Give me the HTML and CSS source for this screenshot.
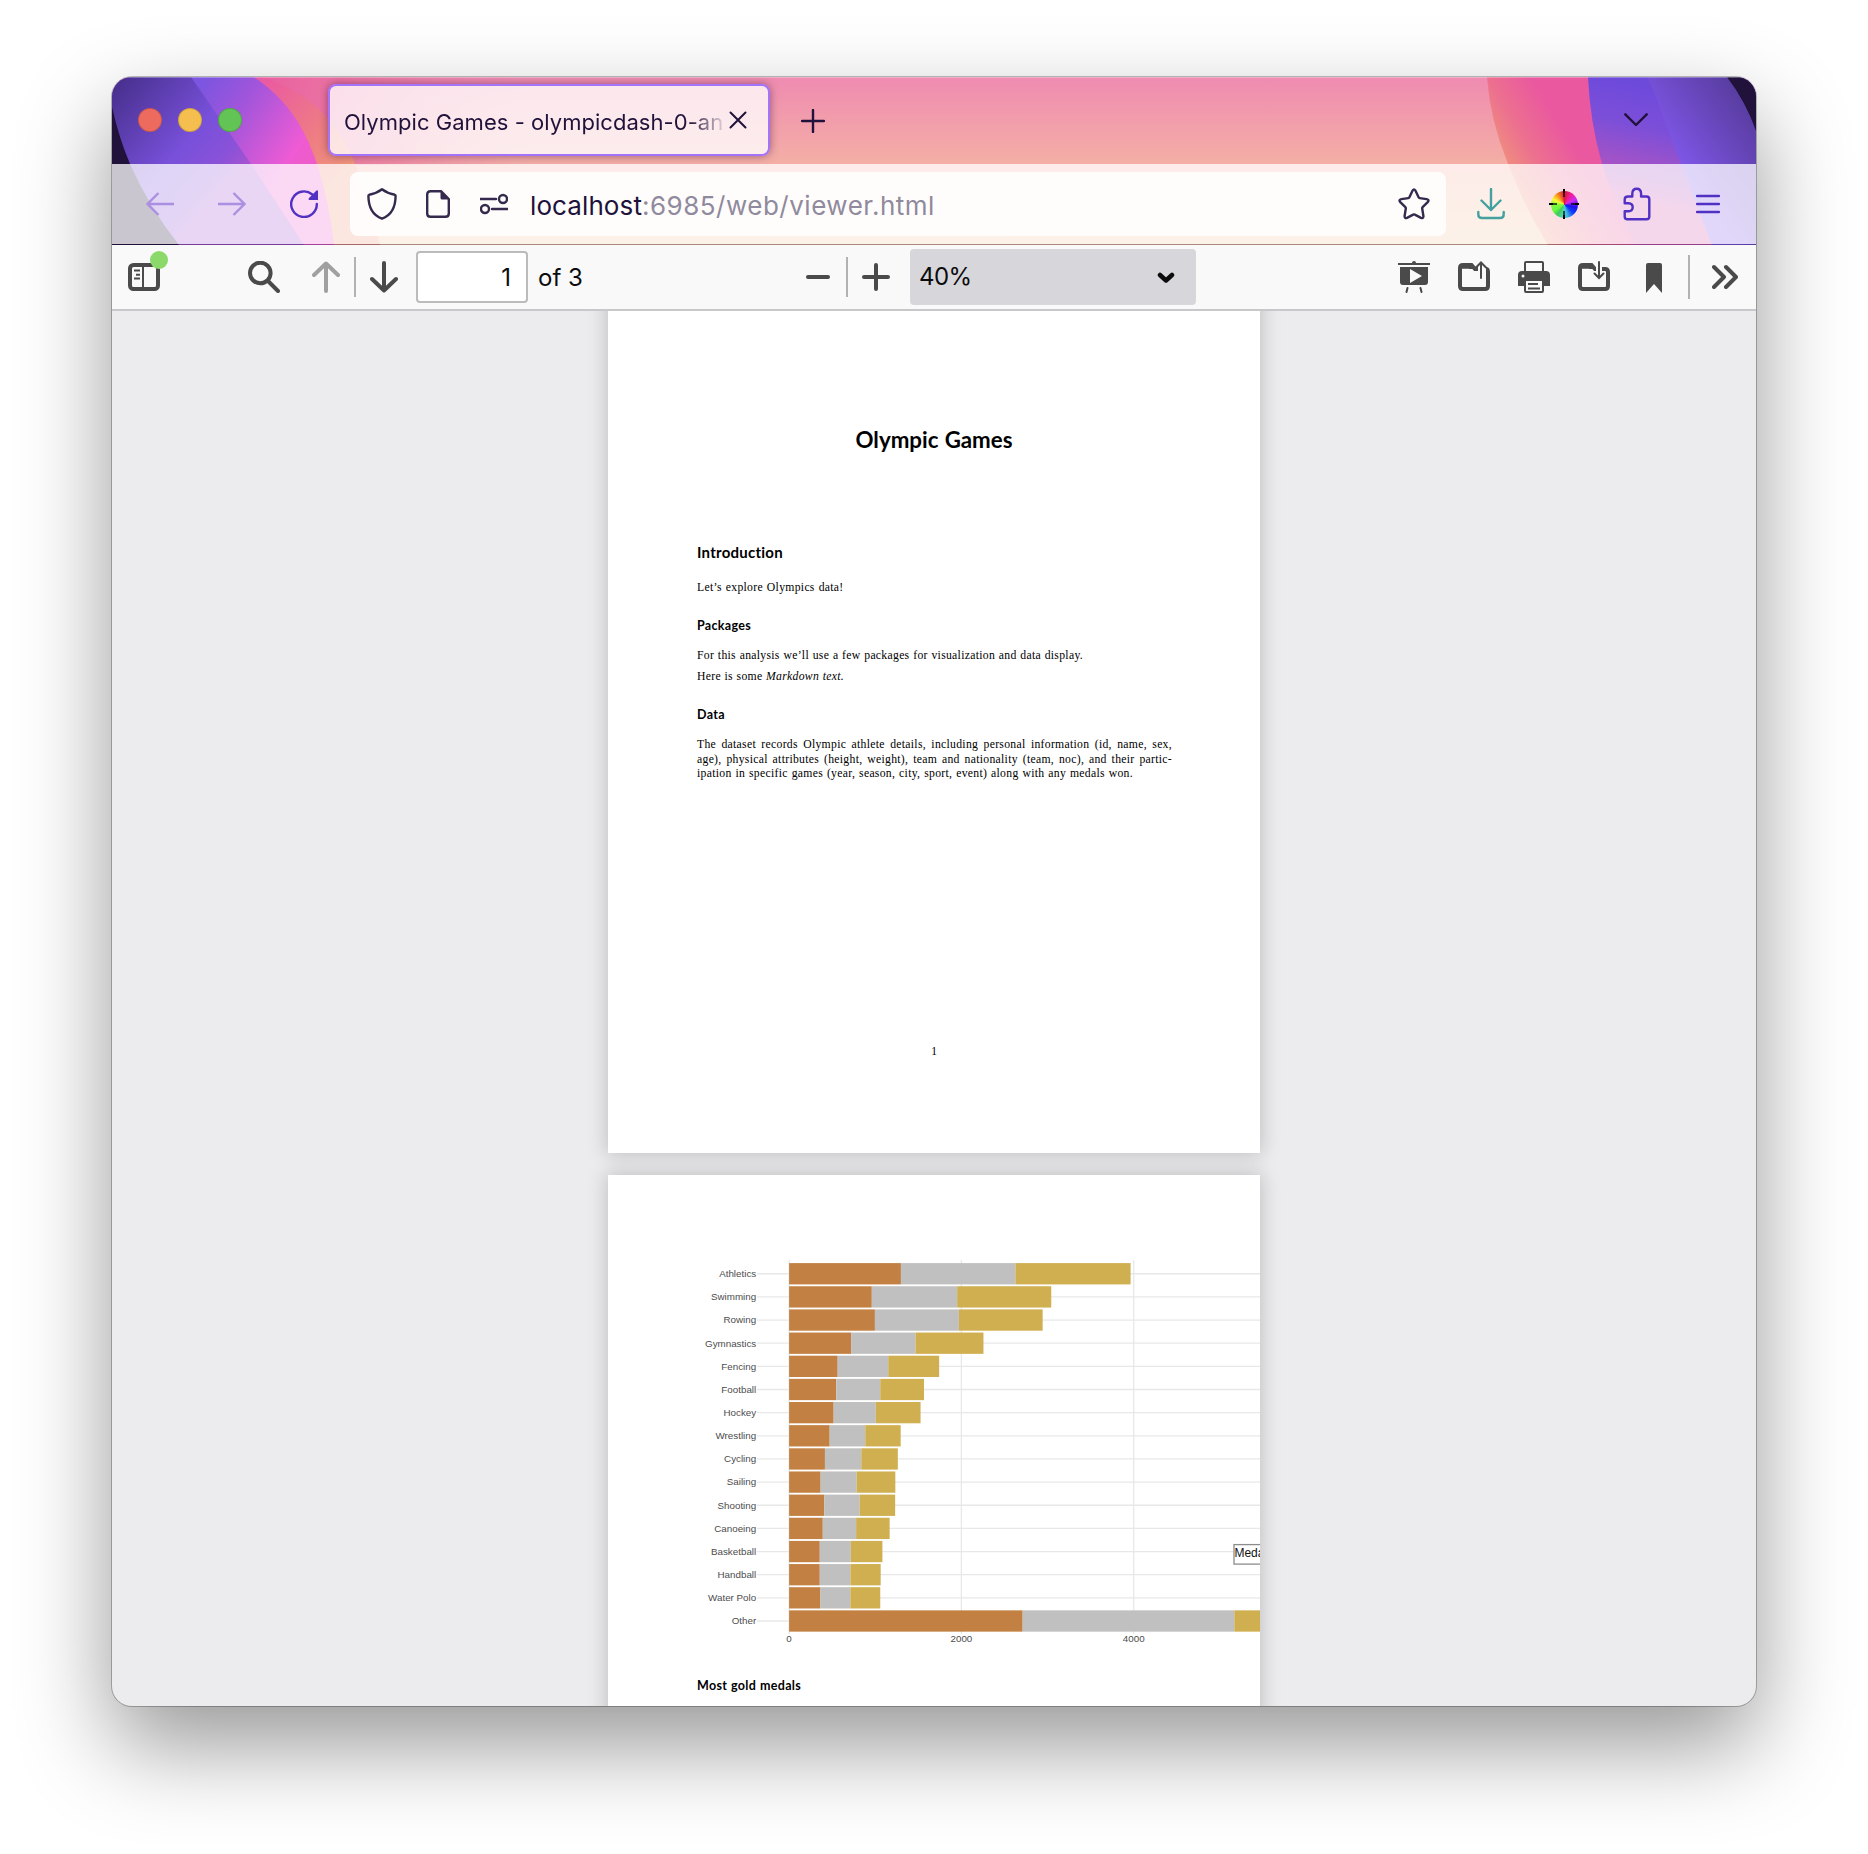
FILE: index.html
```html
<!DOCTYPE html>
<html lang="en">
<head>
<meta charset="utf-8">
<title>Olympic Games</title>
<link rel="stylesheet" href="styles.css">
</head>
<body>
<div class="window">
  <header class="chrome">
    <svg class="theme" viewBox="0 0 1644 168" preserveAspectRatio="none" aria-hidden="true">
      <defs>
        <linearGradient id="wash" x1="0" y1="0" x2="0" y2="1"><stop offset="0" stop-color="#ef8bb1"/><stop offset=".52" stop-color="#f4afa5"/><stop offset="1" stop-color="#f3c89c"/></linearGradient>
        <linearGradient id="flareL" gradientUnits="userSpaceOnUse" x1="150" y1="0" x2="420" y2="0"><stop offset="0" stop-color="#e9609f"/><stop offset=".5" stop-color="#ea70a0" stop-opacity=".55"/><stop offset="1" stop-color="#ef8bb1" stop-opacity="0"/></linearGradient>
        <linearGradient id="emberL" gradientUnits="userSpaceOnUse" x1="150" y1="10" x2="235" y2="90"><stop offset="0" stop-color="#ea5ba1"/><stop offset=".65" stop-color="#ee7f82"/><stop offset="1" stop-color="#f0957c"/></linearGradient>
        <linearGradient id="magenta" gradientUnits="userSpaceOnUse" x1="85" y1="15" x2="190" y2="85"><stop offset="0" stop-color="#7c55e0"/><stop offset=".35" stop-color="#a055db"/><stop offset=".9" stop-color="#ee5bd4"/><stop offset="1" stop-color="#ee5bcb"/></linearGradient>
        <linearGradient id="violet" gradientUnits="userSpaceOnUse" x1="10" y1="0" x2="125" y2="100"><stop offset="0" stop-color="#48308e"/><stop offset=".6" stop-color="#7850da"/><stop offset=".85" stop-color="#8a52d8"/><stop offset="1" stop-color="#a553d0"/></linearGradient>
        <linearGradient id="emberR" gradientUnits="userSpaceOnUse" x1="1385" y1="90" x2="1450" y2="50"><stop offset="0" stop-color="#f19779"/><stop offset=".5" stop-color="#ec708f"/><stop offset="1" stop-color="#ea589f"/></linearGradient>
        <linearGradient id="violetR" gradientUnits="userSpaceOnUse" x1="1530" y1="10" x2="1505" y2="120"><stop offset="0" stop-color="#6e4adb"/><stop offset=".35" stop-color="#7d4fd8"/><stop offset=".8" stop-color="#ad54c2"/><stop offset="1" stop-color="#d358b0"/></linearGradient>
        <linearGradient id="duskR" gradientUnits="userSpaceOnUse" x1="1555" y1="75" x2="1640" y2="15"><stop offset="0" stop-color="#8058ea"/><stop offset=".5" stop-color="#6a48c0"/><stop offset="1" stop-color="#553a98"/></linearGradient>
      </defs>
      <rect width="1644" height="168" fill="url(#wash)"/>
      <rect x="140" width="290" height="88" fill="url(#flareL)"/>
      <path d="M0 0H150C196 14 227 45 243 87Q258 125 268 168H0Z" fill="url(#emberL)"/>
      <path d="M0 0H142C177 24 193 52 205 87Q217 125 222 168H0Z" fill="url(#magenta)"/>
      <path d="M0 0H79L139 87L192 168H0Z" fill="url(#violet)"/>
      <path d="M0 30Q7 61 18 87Q38 132 67 168H0Z" fill="#20123a"/>
      <path d="M1375 0Q1378 43 1396 87Q1411 127 1436 168H1644V0Z" fill="url(#emberR)"/>
      <path d="M1476 0Q1478 45 1490 87Q1503 131 1523 168H1644V0Z" fill="url(#violetR)"/>
      <path d="M1536 0L1569 87L1600 168H1644V0Z" fill="url(#duskR)"/>
      <path d="M1615 0Q1634 25 1644 54V0Z" fill="#20123a"/>
    </svg>

    <div class="tabstrip">
      <div class="lights"><i class="light red"></i><i class="light amber"></i><i class="light green"></i></div>
      <div class="tab">
        <span class="tab-title">Olympic Games - olympicdash-0-an</span>
        <svg class="tab-close" width="18" height="18" viewBox="0 0 18 18"><path d="M1.5 1.5l15 15M16.500 1.500l-15 15"/></svg>
      </div>
      <svg class="new-tab" width="24" height="24" viewBox="0 0 24 24"><path d="M12 1v22M1 12h22"/></svg>
      <svg class="all-tabs" width="24" height="14" viewBox="0 0 24 14"><path d="M1.300 1.300L12 12L22.700 1.300"/></svg>
    </div>

    <div class="navbar">
      <div class="nav-button dim"><svg width="28" height="24" viewBox="0 0 28 24"><path d="M28 12H2M12.500 1L1.500 12L12.500 23"/></svg></div>
      <div class="nav-button dim"><svg width="28" height="24" viewBox="0 0 28 24"><path d="M0 12H26M15.500 1L26.500 12L15.500 23"/></svg></div>
      <div class="nav-button"><svg width="28" height="28" viewBox="0 0 28 28"><path d="M26.800 14A12.800 12.800 0 1 1 22 4.200"/><path class="solid" d="M28 1V10H19Q18 9 19 8L26.500 .5Q27.500 0 28 1Z"/></svg></div>

      <div class="urlbar">
        <svg width="30" height="32" viewBox="0 0 30 32"><path d="M15 1.300C11.500 4 6.500 6 2.200 6.800Q1.400 7 1.400 8C1.500 18 5 27 15 30.700C25 27 28.500 18 28.600 8Q28.600 7 27.800 6.800C23.500 6 18.500 4 15 1.300Z"/></svg>
        <svg class="doc" width="24" height="28" viewBox="0 0 24 28"><path d="M15 1.200H4.500Q1.200 1.200 1.200 4.500V23.500Q1.200 26.800 4.500 26.800H19.500Q22.800 26.800 22.800 23.500V9Z"/><path class="solid" d="M14.500 .5V8Q14.500 9.500 16 9.500H23.500Z"/></svg>
        <svg class="perms" width="28" height="22" viewBox="0 0 28 22"><path d="M0 6H16M12 16H28"/><circle cx="23" cy="6" r="4"/><circle cx="5" cy="16" r="4"/></svg>
        <div class="url"><span class="host">localhost</span><span class="path">:6985/web/viewer.html</span></div>
        <svg class="star" width="32" height="32" viewBox="0 0 32 32"><path d="M14.600 2.500Q16 .2 17.400 2.500L20.600 9.300Q20.900 10 21.700 10.100L28.600 11.100Q31.700 11.800 29.700 14.100L24.600 19.200Q24.100 19.800 24.200 20.500L25.400 28Q25.500 30.700 23 29.900L16.800 26.600Q16 26.200 15.200 26.600L9 29.900Q6.500 30.700 6.600 28L7.800 20.500Q7.900 19.800 7.400 19.200L2.300 14.100Q.3 11.800 3.400 11.100L10.300 10.100Q11.100 10 11.400 9.300Z"/></svg>
      </div>

      <div class="nav-button teal"><svg width="28" height="32" viewBox="0 0 28 32"><path d="M14 1V22M4.500 12.500L14 22L23.500 12.500M1.300 24V26.500Q1.300 30 5 30H23Q26.700 30 26.700 26.500V24"/></svg></div>
      <div class="nav-button"><div class="wheel"><svg width="30" height="30" viewBox="0 0 30 30"><path d="M15 0V8M15 22V30M0 15H8M22 15H30" opacity=".65"/><path d="M15 0V4M15 26V30M0 15H4M26 15H30"/></svg></div></div>
      <div class="nav-button puzzle"><svg width="28" height="34" viewBox="0 0 28 34"><path d="M5 9.500H9.300V6.500Q9.500 1.800 13.700 1.800Q17.900 1.800 18.100 6.500V9.500H23.500Q26.300 9.500 26.300 12.300V29.500Q26.300 32.300 23.500 32.300H4.500Q1.700 32.300 1.700 29.500V24.300H5.500Q9.700 24 9.700 20.200Q9.700 16.400 5.500 16.200H1.700V12.500Q1.700 9.500 5 9.500Z"/></svg></div>
      <div class="nav-button"><svg class="menu" width="24" height="20" viewBox="0 0 24 20"><path d="M1 2H23M1 10H23M1 18H23"/></svg></div>
    </div>
  </header>

  <div class="toolbar">
    <div class="sidebar-toggle">
      <svg width="32" height="32" viewBox="0 0 32 32"><rect x="2" y="4" width="28" height="24" rx="3.500" fill="none" stroke="#4a4a4b" stroke-width="4"/><path d="M15 4V28M6 9.500H12M8 13.700H12M6 17.500H12" stroke="#4a4a4b" stroke-width="2" fill="none"/></svg>
      <i class="badge"></i>
    </div>
    <svg class="find" width="32" height="32" viewBox="0 0 32 32"><circle cx="12.300" cy="12" r="10.300"/><path d="M20 20L30 30"/></svg>
    <svg class="prev" width="28" height="32" viewBox="0 0 28 32"><path d="M14 30V3M2 14L14 2.500L26 14"/></svg>
    <i class="rule"></i>
    <svg class="next" width="28" height="32" viewBox="0 0 28 32"><path d="M14 2V29M2 18L14 29.500L26 18"/></svg>
    <div class="page-input">1</div>
    <span class="page-count">of 3</span>
    <svg class="minus" width="24" height="28" viewBox="0 0 24 28"><path d="M2 14H22"/></svg>
    <i class="rule zoom-rule"></i>
    <svg class="plus" width="28" height="28" viewBox="0 0 28 28"><path d="M2 14H26M14 2V26"/></svg>
    <div class="zoom-select"><span>40%</span><svg width="18" height="12" viewBox="0 0 18 12"><path d="M3 3L9 8.500L15 3"/></svg></div>
    <div class="actions">
      <svg class="fill" width="32" height="32" viewBox="0 0 32 32"><path fill-rule="evenodd" d="M0 2H14Q14 0 16 0T18 2H32V4H0ZM2 6H30V21Q30 24 27 24H5Q2 24 2 21ZM12 8V22L24 15Z"/><path class="thin" d="M9.500 27L8.500 31M22.500 27L23.500 31"/></svg>
      <svg width="32" height="32" viewBox="0 0 32 32"><path class="thick" d="M22 8H17L13.500 4H5Q2 4 2 7V25Q2 28 5 28H27Q30 28 30 25V11Q30 8 28 8"/><path class="fillp" d="M2 8L13 8L18 8L14 3H5L2 5Z"/><path d="M4 8.500H11" stroke="#f9f9fa" stroke-width="1.500"/><path class="halo" d="M23 2V18"/><path class="thin" d="M23 17V2M18 6.500L23 1.500L28 6.500"/></svg>
      <svg class="fill" width="32" height="32" viewBox="0 0 32 32"><path fill-rule="evenodd" d="M6 10V2Q6 0 8 0H24Q26 0 26 2V10H28Q32 10 32 14V25H26V30Q26 32 24 32H8Q6 32 6 30V25H0V14Q0 10 4 10ZM8 2V10H24V2ZM8 20V30H24V20ZM5 13.500A1.500 1.500 0 1 0 5 16.500A1.500 1.500 0 1 0 5 13.500Z"/><path d="M10 22H20V24H10ZM10 26.500H22V28.500H10Z"/></svg>
      <svg width="32" height="32" viewBox="0 0 32 32"><path class="thick" d="M20 8H17L13.500 4H5Q2 4 2 7V25Q2 28 5 28H27Q30 28 30 25V11Q30 8 27 8H24"/><path class="fillp" d="M2 8L13 8L18 8L14 3H5L2 5Z"/><path d="M4 8.500H11" stroke="#f9f9fa" stroke-width="1.500"/><path class="halo" d="M21 0V16"/><path class="thin" d="M21 1V16M16.500 12.500L21 17L25.500 12.500"/></svg>
      <svg class="fill" width="32" height="32" viewBox="0 0 32 32"><path d="M8 4Q8 2 10 2H22Q24 2 24 4V32L16 23L8 32Z"/></svg>
    </div>
    <i class="rule tall"></i>
    <svg class="more" width="26" height="26" viewBox="0 0 26 26"><path d="M2 3L12 13L2 23M14 3L24 13L14 23"/></svg>
  </div>

  <main class="viewer">
    <article class="page first">
      <h1>Olympic Games</h1>
      <div class="column">
        <h2>Introduction</h2>
        <p class="line w-lets">Let’s explore Olympics data!</p>
        <h3 class="packages">Packages</h3>
        <p class="line w-for">For this analysis we’ll use a few packages for visualization and data display.</p>
        <p class="line w-here">Here is some <em>Markdown text.</em></p>
        <h3 class="data">Data</h3>
        <div class="para">
          <p class="line">The dataset records Olympic athlete details, including personal information (id, name, sex,</p>
          <p class="line">age), physical attributes (height, weight), team and nationality (team, noc), and their partic-</p>
          <p class="line w-last">ipation in specific games (year, season, city, sport, event) along with any medals won.</p>
        </div>
      </div>
      <div class="folio">1</div>
    </article>
    <article class="page second">
      <svg id="chart" class="chart" width="652" height="480" viewBox="608 1175 652 480"></svg>
      <h3 class="gold">Most gold medals</h3>
    </article>
  </main>
</div>
<script src="chart.js"></script>
</body>
</html>
```
FILE: styles.css
```css
* { box-sizing: border-box; }
body {
  margin: 0;
  width: 1868px;
  height: 1854px;
  padding: 77px 112px 0;
  background: #fff;
  overflow: hidden;
  font-family: Inter, "Liberation Sans", sans-serif;
}
svg { display: block; flex: none; }
h1, h2, h3, p { margin: 0; }

.window {
  width: 1644px;
  height: 1629px;
  border-radius: 20px;
  background: #ececee;
  box-shadow: 0 0 0 1px rgba(0, 0, 0, .25), 0 39px 92px rgba(0, 0, 0, .41);
  overflow: hidden;
  display: flex;
  flex-direction: column;
}

/* Browser chrome */
.chrome { position: relative; height: 168px; flex: none; }
.theme { position: absolute; left: 0; top: 0; width: 1644px; height: 168px; z-index: 0; }
.chrome::after {
  content: "";
  position: absolute;
  inset: 0;
  border-bottom: 1px solid rgba(32, 18, 58, .35);
  border-top: 1px solid rgba(255, 255, 255, .3);
  pointer-events: none;
}
.tabstrip { position: relative; height: 87px; display: flex; align-items: center; padding: 0 108px 2px 26px; }
.lights { display: flex; gap: 16px; width: 190px; }
.light { width: 24px; height: 24px; border-radius: 50%; border: 1px solid rgba(0, 0, 0, .16); }
.red { background: #ed6a5e; }
.amber { background: #f5bf4f; }
.green { background: #61c454; }
.tab {
  width: 442px;
  height: 72px;
  padding: 0 21px 0 14px;
  border: 2px solid #a374f9;
  border-radius: 8px;
  background: rgba(255, 255, 255, .78);
  box-shadow: 0 0 8px rgba(60, 20, 60, .5);
  display: flex;
  align-items: center;
  justify-content: space-between;
}
.tab-title {
  width: 379px;
  overflow: hidden;
  white-space: nowrap;
  font-size: 22px;
  line-height: 32px;
  letter-spacing: .04px;
  color: #20123a;
  padding-top: 5px;
  -webkit-mask-image: linear-gradient(to right, #000 345px, transparent 384px);
  mask-image: linear-gradient(to right, #000 345px, transparent 384px);
}
.tab-close, .new-tab, .all-tabs { fill: none; stroke: #20123a; stroke-width: 2.4; stroke-linecap: round; stroke-linejoin: round; }
.tab-close { stroke-width: 2; }
.new-tab { margin-left: 31px; margin-top: 3px; }
.all-tabs { margin-left: auto; }

.navbar { position: relative; height: 80px; padding: 0 12px; display: flex; align-items: center; background: rgba(255, 255, 255, .76); }
.nav-button { width: 72px; height: 64px; display: flex; align-items: center; justify-content: center; color: #5130c4; }
.navbar svg { fill: none; stroke: currentColor; stroke-width: 2.4; stroke-linecap: round; stroke-linejoin: round; }
.navbar .solid { fill: currentColor; stroke: none; }
.nav-button.dim { color: #ab90e1; }
.dim svg { stroke-linecap: butt; stroke-linejoin: miter; }
.nav-button.teal { color: #45a1a1; padding-right: 2px; }
.teal svg { margin-top: -1px; }
.puzzle { padding-left: 2px; }
.urlbar {
  width: 1096px;
  height: 64px;
  margin: 0 10px;
  padding: 0 16px 0 17px;
  border-radius: 8px;
  background: rgba(255, 255, 255, .86);
  display: flex;
  align-items: center;
  color: #352a4d;
}
.doc { margin-left: 29px; }
.perms { margin-left: 30px; }
.url { margin-left: 22px; padding-top: 3px; font-size: 26px; line-height: 36px; white-space: nowrap; letter-spacing: .5px; }
.host { color: #20123a; letter-spacing: .1px; }
.path { color: #8f8a9d; }
.star { margin-left: auto; }
.wheel { position: relative; width: 30px; height: 30px; }
.wheel::before {
  content: "";
  position: absolute;
  inset: 1.500px;
  border-radius: 50%;
  background: conic-gradient(#d8173c, #f31b90 30deg, #d02bf0 65deg, #1a10f0 105deg, #1040f5 135deg, #3fb0e8 165deg, #4fd8c0 185deg, #40c85a 215deg, #6dfa3c 240deg, #80fa40 268deg, #fbf936 295deg, #f88a1c 325deg, #d8173c);
}
.wheel svg { position: relative; stroke: #000; stroke-width: 2; stroke-linecap: butt; }

/* Viewer toolbar */
.toolbar { height: 66px; flex: none; display: flex; align-items: center; padding: 0 18px 0 16px; background: #f9f9fa; border-bottom: 2px solid #c8c8ca; color: #0c0c0d; font-size: 24px; }
.toolbar > svg { fill: none; stroke: #4a4a4b; stroke-width: 4; stroke-linecap: round; stroke-linejoin: round; }
.sidebar-toggle { position: relative; width: 32px; height: 32px; }
.badge { position: absolute; left: 22px; top: -10px; width: 18px; height: 18px; border-radius: 50%; background: #8bd96b; }
.find { margin-left: 88px; }
.prev { margin-left: 32px; opacity: .5; }
.rule { width: 2px; height: 40px; background: #b2b2b4; margin-left: 14px; flex: none; }
.next { margin-left: 14px; }
.page-input { width: 112px; height: 52px; margin-left: 18px; padding-right: 15px; border: 2px solid #bbbbbc; border-radius: 4px; background: #fff; line-height: 50px; text-align: right; }
.page-count { margin-left: 10px; width: 50px; line-height: 50px; white-space: nowrap; padding-top: 1px; }
.minus { margin-left: 218px; }
.zoom-rule { margin-left: 16px; }
.plus { margin-left: 14px; }
.zoom-select { width: 286px; height: 56px; margin-left: 20px; padding: 0 21px 0 9px; border-radius: 4px; background: #d7d7db; display: flex; align-items: center; justify-content: space-between; letter-spacing: -.6px; line-height: 54px; }
.zoom-select svg { fill: none; stroke: #0c0c0d; stroke-width: 4.500; stroke-linecap: round; stroke-linejoin: round; margin-top: 1px; }
.actions { margin-left: 202px; display: flex; gap: 28px; }
.actions svg { fill: none; }
.actions .fill, .actions .fillp { fill: #4a4a4b; }
.thick { stroke: #4a4a4b; stroke-width: 4; }
.thin { stroke: #4a4a4b; stroke-width: 2; stroke-linecap: round; }
.halo { stroke: #f9f9fa; stroke-width: 6; }
.tall { height: 44px; margin-left: 18px; }
.more { margin-left: 22px; }

/* Documents */
.viewer { flex: 1; overflow: hidden; display: flex; flex-direction: column; align-items: center; gap: 22px; }
.page { width: 652px; flex: none; background: #fff; box-shadow: 0 0 18px 2px rgba(0, 0, 0, .18); color: #000; }
.first { height: 882px; margin-top: -40px; padding-top: 156px; }
.second { height: 844px; overflow: hidden; }
h1, h2, h3 { font-family: Lato, "Open Sans", sans-serif; font-weight: 700; white-space: nowrap; }
h1 { width: 157px; margin: 0 auto; font-size: 22.300px; line-height: 26px; text-align-last: justify; }
.column { width: 475px; margin: 90px 0 0 89px; }
h2 { font-size: 15px; line-height: 18px; letter-spacing: .25px; }
h3 { font-size: 12.500px; line-height: 15px; letter-spacing: .3px; }
.line { font-family: "Liberation Serif", serif; font-size: 11.700px; line-height: 14px; letter-spacing: .3px; white-space: nowrap; text-align: justify; text-align-last: justify; }
.w-lets { width: 146.500px; margin-top: 20px; }
.packages { margin-top: 23px; }
.w-for { width: 386px; margin-top: 16px; }
.w-here { width: 147px; margin-top: 7px; }
.data { margin-top: 23px; }
.para { margin-top: 16px; }
.para .line { line-height: 14.500px; }
.w-last { width: 436px; }
.folio { margin-top: 262px; text-align: center; font: 11.500px/14px "Liberation Serif", serif; }
.chart { font-family: "Liberation Sans", Arial, sans-serif; }
.grid { stroke: #e8e8e8; stroke-width: 1.300; }
.tick { fill: #4d4d4d; font-size: 9.800px; }
.legend { fill: #fff; stroke: #8c8c8c; stroke-width: 1.300; }
.legend-text { fill: #111; font-size: 12px; }
.gold { margin: 23px 0 0 89px; width: 104px; text-align-last: justify; }
```
FILE: chart.js
```js
// Medal counts per sport: bronze, silver, gold.
const sports = [
  ["Athletics", 1298, 1329, 1337], ["Swimming", 960, 991, 1092], ["Rowing", 996, 975, 972],
  ["Gymnastics", 720, 747, 789], ["Fencing", 564, 587, 591], ["Football", 547, 511, 508],
  ["Hockey", 517, 489, 520], ["Wrestling", 471, 413, 411], ["Cycling", 416, 422, 424],
  ["Sailing", 366, 418, 449], ["Shooting", 409, 409, 413], ["Canoeing", 391, 387, 389],
  ["Basketball", 356, 360, 367], ["Handball", 356, 356, 351], ["Water Polo", 364, 347, 347],
  ["Other", 2711, 2457, 2500]
];
const colors = ["#c28142", "#c0c0c0", "#cfaf4f"];
const x0 = 789.1, unit = 172.3 / 2000, top0 = 1263.1, pitch = 23.15, bar = 21.3;
let out = "";
[0, 2000, 4000].forEach(v => {
  const x = x0 + v * unit;
  out += `<path class="grid" d="M${x} 1260V1634"/><text class="tick" text-anchor="middle" x="${x}" y="1641.5">${v}</text>`;
});
sports.forEach(([name, ...counts], i) => {
  const y = top0 + i * pitch;
  out += `<path class="grid" d="M757 ${y + bar / 2}H1260"/>`;
  out += `<text class="tick" text-anchor="end" x="756.2" y="${y + bar / 2 + 3.3}">${name}</text>`;
  let x = x0;
  counts.forEach((c, k) => {
    out += `<rect x="${x}" y="${y}" width="${c * unit}" height="${bar}" fill="${colors[k]}"/>`;
    x += c * unit;
  });
});
out += `<rect class="legend" x="1234" y="1544.6" width="60" height="19.5"/><text class="legend-text" x="1234.4" y="1557.3">Meda</text>`;
document.getElementById("chart").innerHTML = out;
```
